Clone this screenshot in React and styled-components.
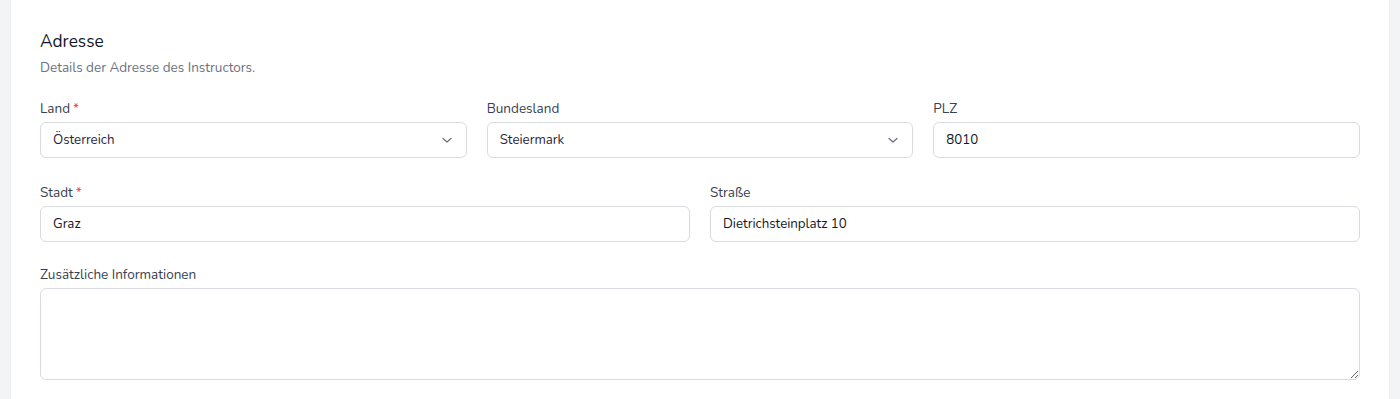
import styled, { createGlobalStyle } from 'styled-components'

const GlobalStyle = createGlobalStyle`
  html, body {
    margin: 0;
    padding: 0;
    background: #f3f4f6;
    font-family: 'Nunito', 'Lato', 'Noto Sans', sans-serif;
    color: #111827;
  }
  * {
    box-sizing: border-box;
  }
`

const Page = styled.div`
  padding: 0 10px;
  min-height: 399px;
`

const Card = styled.section`
  background: #ffffff;
  border: 1px solid #eceef1;
  border-top: none;
  padding: 30px 29px 40px;
`

const Title = styled.h2`
  margin: 0;
  font-size: 17.3px;
  line-height: 24px;
  font-weight: 400;
  color: #111827;
`

const Subtitle = styled.p`
  margin: 4px 0 0;
  font-size: 13.5px;
  line-height: 20px;
  color: #6b7280;
`

const Fields = styled.div`
  margin-top: 20px;
  display: flex;
  flex-direction: column;
  gap: ${(p) => p.$gap}px;
`

const Row = styled.div`
  display: grid;
  grid-template-columns: repeat(${(p) => p.$cols}, 1fr);
  gap: 20px;
  margin-top: ${(p) => p.$offset || 0}px;
`

const Field = styled.div`
  display: flex;
  flex-direction: column;
  gap: 3px;
`

const Label = styled.label`
  font-size: 13.5px;
  line-height: 21px;
  color: #374151;
`

const Required = styled.span`
  color: #ef4444;
  margin-left: 3px;
`

const boxStyles = `
  width: 100%;
  height: 36px;
  border: 1px solid #d8dbe0;
  border-radius: 6px;
  background: #fff;
  padding: 0 12px;
  font-family: inherit;
  font-size: 13.3px;
  color: #111827;
  outline: none;
`

const Input = styled.input`
  ${boxStyles}
`

const SelectWrap = styled.div`
  position: relative;
`

const Select = styled.select`
  ${boxStyles}
  appearance: none;
  color: #1f2937;
`

const Chevron = styled.svg`
  position: absolute;
  right: 14px;
  top: 50%;
  transform: translateY(-50%);
  pointer-events: none;
`

const TextArea = styled.textarea`
  ${boxStyles}
  height: 92px;
  padding: 8px 12px;
  resize: vertical;
  display: block;
`

const SelectField = ({ value }) => (
  <SelectWrap>
    <Select defaultValue={value}>
      <option>{value}</option>
    </Select>
    <Chevron width="12" height="12" viewBox="0 0 12 12" fill="none">
      <path d="M2 4.5 L6 8 L10 4.5" stroke="#6b7280" strokeWidth="1.3" strokeLinecap="round" strokeLinejoin="round" />
    </Chevron>
  </SelectWrap>
)

export default function App() {
  return (
    <>
      <GlobalStyle />
      <Page>
        <Card>
          <Title>Adresse</Title>
          <Subtitle>Details der Adresse des Instructors.</Subtitle>
          <Fields $gap={24}>
            <Row $cols={3}>
              <Field>
                <Label>Land<Required>*</Required></Label>
                <SelectField value="Österreich" />
              </Field>
              <Field>
                <Label>Bundesland</Label>
                <SelectField value="Steiermark" />
              </Field>
              <Field>
                <Label>PLZ</Label>
                <Input defaultValue="8010" />
              </Field>
            </Row>
            <Row $cols={2}>
              <Field>
                <Label>Stadt<Required>*</Required></Label>
                <Input defaultValue="Graz" />
              </Field>
              <Field>
                <Label>Straße</Label>
                <Input defaultValue="Dietrichsteinplatz 10" />
              </Field>
            </Row>
            <Row $cols={1} $offset={-2}>
              <Field>
                <Label>Zusätzliche Informationen</Label>
                <TextArea />
              </Field>
            </Row>
          </Fields>
        </Card>
      </Page>
    </>
  )
}
